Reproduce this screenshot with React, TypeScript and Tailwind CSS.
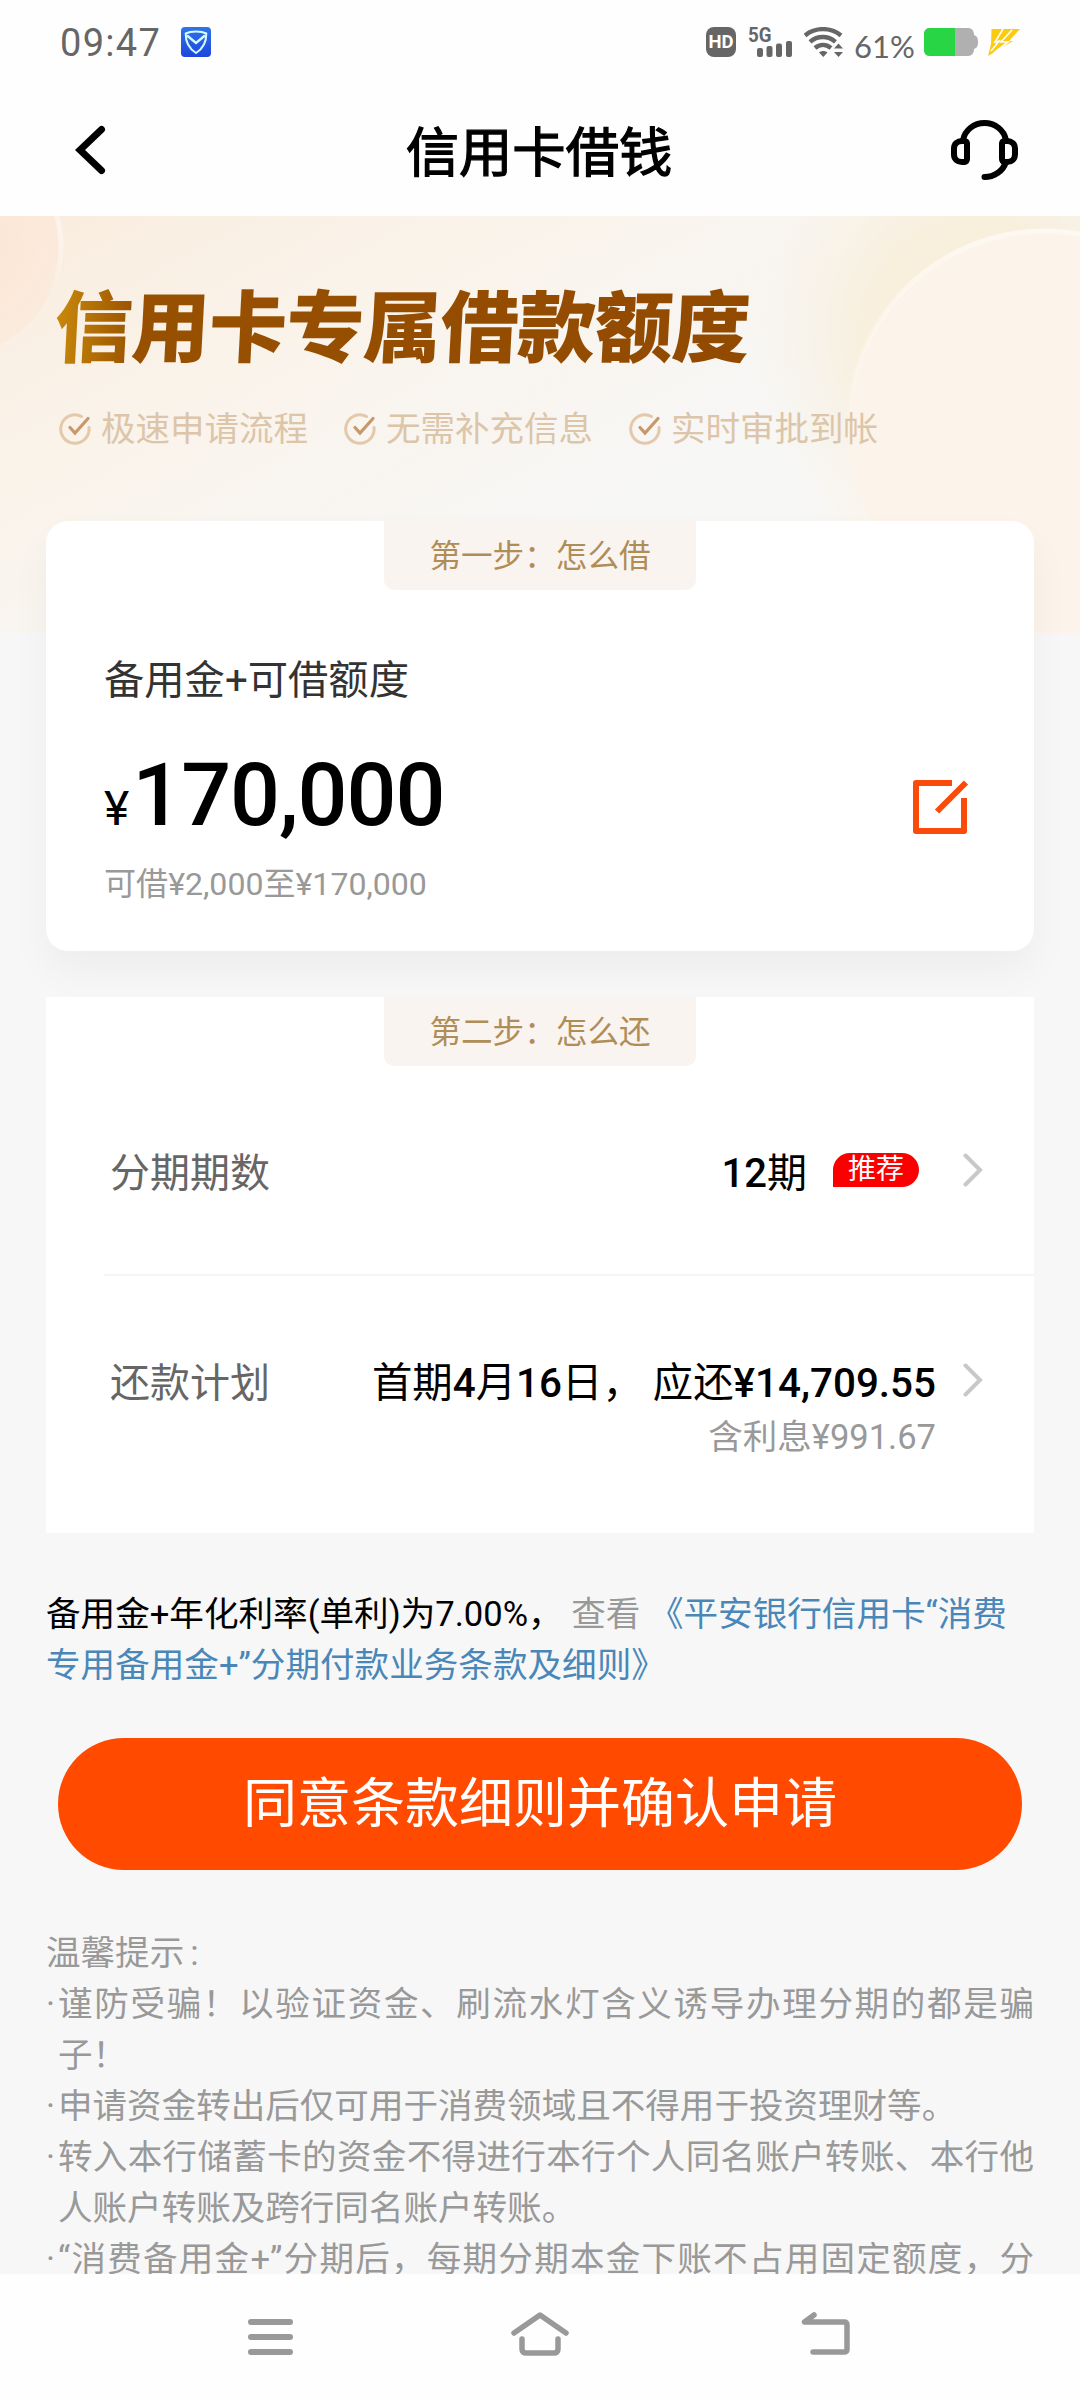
import type { ReactNode } from "react";

const features = ["极速申请流程", "无需补充信息", "实时审批到帐"];

const tips = [
  "谨防受骗！以验证资金、刷流水灯含义诱导办理分期的都是骗子！",
  "申请资金转出后仅可用于消费领域且不得用于投资理财等。",
  "转入本行储蓄卡的资金不得进行本行个人同名账户转账、本行他人账户转账及跨行同名账户转账。",
];

function StatusBar() {
  return (
    <div className="flex h-[84px] items-center justify-between pl-[60px] pr-[60px] text-[#666]">
      <div className="flex items-center gap-[20px]">
        <span className="pt-px text-[38px] leading-none tracking-[1.300px]">09:47</span>
        <svg width="30" height="30" viewBox="0 0 30 30">
          <defs>
            <linearGradient id="shield" x1="0" y1="0" x2="0" y2="1">
              <stop offset="0" stopColor="#2f74ea" />
              <stop offset="1" stopColor="#1e46dc" />
            </linearGradient>
          </defs>
          <rect width="30" height="30" rx="4" fill="url(#shield)" />
          <path d="M15 4.500c4 0 8 .8 10.300 2C25.500 15 22 21.500 15 26 8 21.500 4.500 15 4.700 6.500 7 5.300 11 4.500 15 4.500z" fill="none" stroke="#d4fbff" strokeWidth="2" />
          <path d="M6 8.500l9 7.500 9-7.500" fill="none" stroke="#d4fbff" strokeWidth="2.400" />
        </svg>
      </div>
      <div className="flex items-center">
        <span className="flex size-[30px] items-center justify-center rounded-[8px] bg-[#666] text-[18.500px] font-bold leading-none text-white">
          HD
        </span>
        <svg className="ml-3 overflow-visible" width="45" height="30" viewBox="0 0 45 30" fill="#666">
          <text x="0" y="14.500" fontSize="20" fontWeight="700" fontFamily="Roboto, sans-serif" textLength="23.500" lengthAdjust="spacingAndGlyphs">
            5G
          </text>
          <rect x="9" y="21" width="6" height="9" rx="2" />
          <rect x="18.500" y="19" width="6" height="11" rx="2" />
          <rect x="28" y="16.500" width="6" height="13.500" rx="2" />
          <rect x="38" y="14" width="6" height="16" rx="2" />
        </svg>
        <svg className="ml-[11px]" width="40" height="30" viewBox="0 0 40 30">
          <g fill="none" stroke="#666" strokeWidth="4.400">
            <path d="M1 8.500C11 0 27 0 37 8.500" />
            <path d="M6 14.800c7.500-6.400 18-6.400 25.500 0" />
            <path d="M11 21c4.700-4 11-4 16 0" />
          </g>
          <path d="M15 25.500c2.500-2 6-2 8.500 0L19.300 30zM30 21.500l4.500-5 4.500 5zM30 25l4.500 5 4.500-5z" fill="#666" />
        </svg>
        <span className="ml-[10px] w-[61px] pt-[7px] font-[Lato] text-[31px] leading-[30px]">61%</span>
        <svg className="ml-[9px]" width="54" height="28" viewBox="0 0 54 28">
          <path d="M6 0h38c4 0 6 3 6 7 3 1 4 3 4 7s-1 6-4 7c0 4-2 7-6 7H6c-4 0-6-3-6-6V6c0-3 2-6 6-6z" fill="#b0b0b0" />
          <path d="M6 0h25v28H6c-4 0-6-3-6-6V6c0-3 2-6 6-6z" fill="#28d545" />
        </svg>
        <svg className="ml-[9px]" width="33" height="27" viewBox="0 0 33 27">
          <path d="M4.500 0h28.500L22 12h4L1 27 4 15z" fill="#fccb10" />
          <path d="M16 0L8 13l4-1L4 22M25 1L14 13l7 0L7 24" fill="none" stroke="#fff" strokeWidth="1.600" />
        </svg>
      </div>
    </div>
  );
}

function HeaderBar() {
  return (
    <div className="flex h-[132px] items-center justify-between pl-[75px] pr-[62px]">
      <svg className="-mt-[1px]" width="52" height="50" viewBox="0 0 52 50" fill="none" stroke="#000" strokeWidth="7" strokeLinecap="round">
        <path d="M26.500 4.500L5 25l21.500 20.500" />
      </svg>
      <h1 className="pt-[7px] text-[53.300px] leading-[60px] text-black [-webkit-text-stroke:1.300px_#000]">信用卡借钱</h1>
      <svg className="-mt-[1px]" width="67" height="60" viewBox="0 0 67 60" fill="none" stroke="#000" strokeWidth="6" strokeLinecap="round">
        <path d="M12 20C14 10 23 3 33.500 3S53 10 55 20" />
        <path d="M11 21h2.500c1.500 0 2.500 1 2.500 2.500V39c0 1.500-1 3-2.500 3H11c-4.500 0-8-3-8-7.500v-6C3 24 6.500 21 11 21zM56 21h-2.500c-1.500 0-2.500 1-2.500 2.500V39c0 1.500 1 3 2.500 3H56c4.500 0 8-3 8-7.500v-6c0-4.500-3.500-7.500-8-7.500z" />
        <path d="M54.500 43C52 51 43 57 33.500 57" />
      </svg>
    </div>
  );
}

function HeroBackdrop() {
  return (
    <svg className="absolute inset-0" width="1080" height="417" viewBox="0 0 1080 417">
      <defs>
        <linearGradient id="base" gradientUnits="userSpaceOnUse" x1="60" y1="-60" x2="330" y2="440">
          <stop offset="0" stopColor="#f9ebdc" />
          <stop offset="0.450" stopColor="#faf3ea" />
          <stop offset="1" stopColor="#f7f7f6" />
        </linearGradient>
        <radialGradient id="halo" gradientUnits="userSpaceOnUse" cx="980" cy="120" r="230">
          <stop offset="0.500" stopColor="#f8efdd" />
          <stop offset="1" stopColor="#f8f1e4" stopOpacity="0" />
        </radialGradient>
        <linearGradient id="warm" x1="0" y1="0" x2="1" y2="0">
          <stop offset="0" stopColor="#fcf4ea" stopOpacity="0" />
          <stop offset="0.450" stopColor="#fcf4ea" />
        </linearGradient>
        <linearGradient id="rim" x1="0" y1="0" x2="0" y2="1">
          <stop offset="0" stopColor="#fdf8f1" />
          <stop offset="0.500" stopColor="#fdf8f1" stopOpacity="0" />
        </linearGradient>
        <radialGradient id="corner" gradientUnits="userSpaceOnUse" cx="-30" cy="30" r="120">
          <stop offset="0" stopColor="#fde5d5" />
          <stop offset="1" stopColor="#fbe9d9" stopOpacity="0.500" />
        </radialGradient>
        <linearGradient id="cornerRim" gradientUnits="userSpaceOnUse" x1="0" y1="0" x2="0" y2="85">
          <stop offset="0.300" stopColor="#fdf3ec" />
          <stop offset="1" stopColor="#fdf3ec" stopOpacity="0" />
        </linearGradient>
      </defs>
      <rect width="1080" height="417" fill="url(#base)" />
      <rect x="720" width="360" height="417" fill="url(#halo)" />
      <rect x="800" y="230" width="280" height="187" fill="url(#warm)" />
      <circle cx="1045" cy="212" r="197" fill="#fcf4ea" stroke="url(#rim)" strokeWidth="5" />
      <circle cx="-48" cy="30" r="109" fill="url(#corner)" stroke="url(#cornerRim)" strokeWidth="5" />
    </svg>
  );
}

function CheckCircle() {
  return (
    <svg width="34" height="34" viewBox="0 0 34 34" fill="none" strokeLinecap="round">
      <path d="M23.500 4.500A14.200 14.200 0 1 0 31 15.500" stroke="#e3c8aa" strokeWidth="3" />
      <path d="M12 15.500l5 5.500L30 6.500" stroke="#c9986a" strokeWidth="3.200" />
    </svg>
  );
}

function StepTab({ children }: { children: ReactNode }) {
  return (
    <div className="mx-auto flex h-[69px] w-[312px] items-center justify-center rounded-b-[10px] bg-[#f9f4ef] pt-[3px] text-[31.600px] text-[#b08d57]">
      {children}
    </div>
  );
}

function Chevron() {
  return (
    <svg width="20" height="34" viewBox="0 0 20 34" fill="none" stroke="#c8c8c8" strokeWidth="4" strokeLinecap="round">
      <path d="M2.500 2.500L17 17 2.500 31.500" />
    </svg>
  );
}

function EditIcon() {
  return (
    <svg width="56" height="55" viewBox="0 0 56 55" fill="none" stroke="#fa4b0a" strokeWidth="6" strokeLinejoin="round">
      <path d="M39 3H3v48h48V18" />
      <path d="M24 31.500L53 2.500" />
    </svg>
  );
}

function NavBar() {
  return (
    <div className="flex h-[126px] items-start bg-[#fefefe] pl-[247px] pt-[37px]">
      <svg width="46" height="46" viewBox="0 0 46 46" stroke="#999" strokeWidth="6" strokeLinecap="round">
        <path d="M4 11h39M4 26h39M4 41h39" />
      </svg>
      <svg className="ml-[218px]" width="58" height="46" viewBox="0 0 58 46" fill="none" stroke="#999" strokeWidth="5.500" strokeLinecap="round" strokeLinejoin="round">
        <path d="M3 22L29 4l26 18" />
        <path d="M11 28v10c0 2.500 1.500 4 4 4h28c2.500 0 4-1.500 4-4V28" />
      </svg>
      <svg className="ml-[232px]" width="49" height="46" viewBox="0 0 49 46" fill="none" stroke="#999" strokeWidth="5.500" strokeLinecap="round" strokeLinejoin="round">
        <path d="M13 4L3.500 11H43c2 0 3 1 3 3v24c0 2-1 3-3 3H12" />
      </svg>
    </div>
  );
}

export default function App() {
  return (
    <div className="flex h-[2400px] w-[1080px] flex-col overflow-hidden bg-[#f7f7f7] font-[Roboto,'Noto_Sans_CJK_SC',sans-serif]">
      <header className="bg-[#fefefe]">
        <StatusBar />
        <HeaderBar />
      </header>

      <main className="relative h-[2058px] overflow-hidden px-[46px]">
        <HeroBackdrop />

        {/* Banner */}
        <section className="relative h-[305px] pl-3 pt-[66px]">
          <h2 className="-ml-[6px] w-fit origin-bottom-left -skew-x-3 bg-linear-to-r from-[#c98a0c] from-0% via-[#985000] via-12% to-[#914a00] bg-clip-text text-[78px] font-black leading-[96px] tracking-[-0.800px] text-transparent">
            信用卡专属借款额度
          </h2>
          <ul className="mt-[25px] flex gap-[35px]">
            {features.map((feature) => (
              <li key={feature} className="flex items-center gap-[9px] text-[34.500px] leading-[52px] text-[#dcc5a8]">
                <CheckCircle />
                {feature}
              </li>
            ))}
          </ul>
        </section>

        {/* Step 1: amount */}
        <section className="relative h-[430px] rounded-[22px] bg-white shadow-[0_20px_40px_rgba(0,0,0,0.045)]">
          <StepTab>第一步：怎么借</StepTab>
          <div className="flex justify-between pl-[58px] pr-[65px] pt-[61px]">
            <div>
              <p className="text-[40.300px] leading-[60px] text-[#333]">备用金+可借额度</p>
              <p className="mt-[34px] flex items-baseline text-black">
                <span className="text-[48px] leading-none">¥</span>
                <span className="ml-[3px] text-[88px] font-medium leading-[100px] tracking-[-1.100px]">170,000</span>
              </p>
              <p className="mt-[15px] text-[32.100px] leading-[48px] text-[#999]">可借¥2,000至¥170,000</p>
            </div>
            <div className="pt-[129px]">
              <EditIcon />
            </div>
          </div>
        </section>

        {/* Step 2: repayment */}
        <section className="relative mt-[46px] h-[536px] bg-white">
          <StepTab>第二步：怎么还</StepTab>
          <div className="ml-[58px] flex h-[210px] items-center border-b-2 border-[#f5f5f5] pl-[6px] pr-[51px] text-[40px]">
            <span className="flex-1 pt-[7px] text-[#666]">分期期数</span>
            <span className="pt-[7px] text-black">
              <span className="font-medium">12</span>期
            </span>
            <span className="ml-[26px] flex h-[34px] w-[86px] items-center justify-center rounded-[17px] rounded-bl-none bg-[#fb0000] text-[28px] text-white">
              推荐
            </span>
            <span className="ml-11">
              <Chevron />
            </span>
          </div>
          <div className="ml-[58px] flex pl-[6px] pr-[51px] pt-[78px] text-[40px] leading-[60px]">
            <span className="flex-1 text-[#666]">还款计划</span>
            <div className="text-right">
              <p className="text-[40.400px] text-black">
                首期<span className="font-medium">4</span>月<span className="font-medium">16</span>日， 应还
                <span className="font-medium">¥14,709.55</span>
              </p>
              <p className="text-[34.500px] leading-[46px] text-[#999]">含利息¥991.67</p>
            </div>
            <span className="ml-[27px] pt-[9px]">
              <Chevron />
            </span>
          </div>
        </section>

        <p className="relative mt-[56px] text-[34.600px] leading-[51px] text-[#999]">
          <span className="text-black">备用金+年化利率(单利)为7.00%，</span> 查看{" "}
          <span className="text-[#4a87b9]">《平安银行信用卡“消费专用备用金+”分期付款业务条款及细则》</span>
        </p>

        <button className="relative mx-3 mt-[47px] flex h-[132px] w-[964px] items-center justify-center rounded-full bg-[#ff4a00] text-[54px] text-white">
          同意条款细则并确认申请
        </button>

        <section className="relative mt-[58px] text-[34.560px] leading-[51px] text-[#999]">
          <p>
            温馨提示<span className="pl-[6px]">:</span>
          </p>
          <ul>
            {tips.map((tip) => (
              <li key={tip} className="flex text-justify">
                <span className="w-3 shrink-0">·</span>
                <span>{tip}</span>
              </li>
            ))}
            <li className="flex">
              <span className="w-3 shrink-0">·</span>
              <span className="flex-1 [text-align-last:justify]">“消费备用金+”分期后，每期分期本金下账不占用固定额度，分</span>
            </li>
          </ul>
        </section>
      </main>

      <NavBar />
    </div>
  );
}
